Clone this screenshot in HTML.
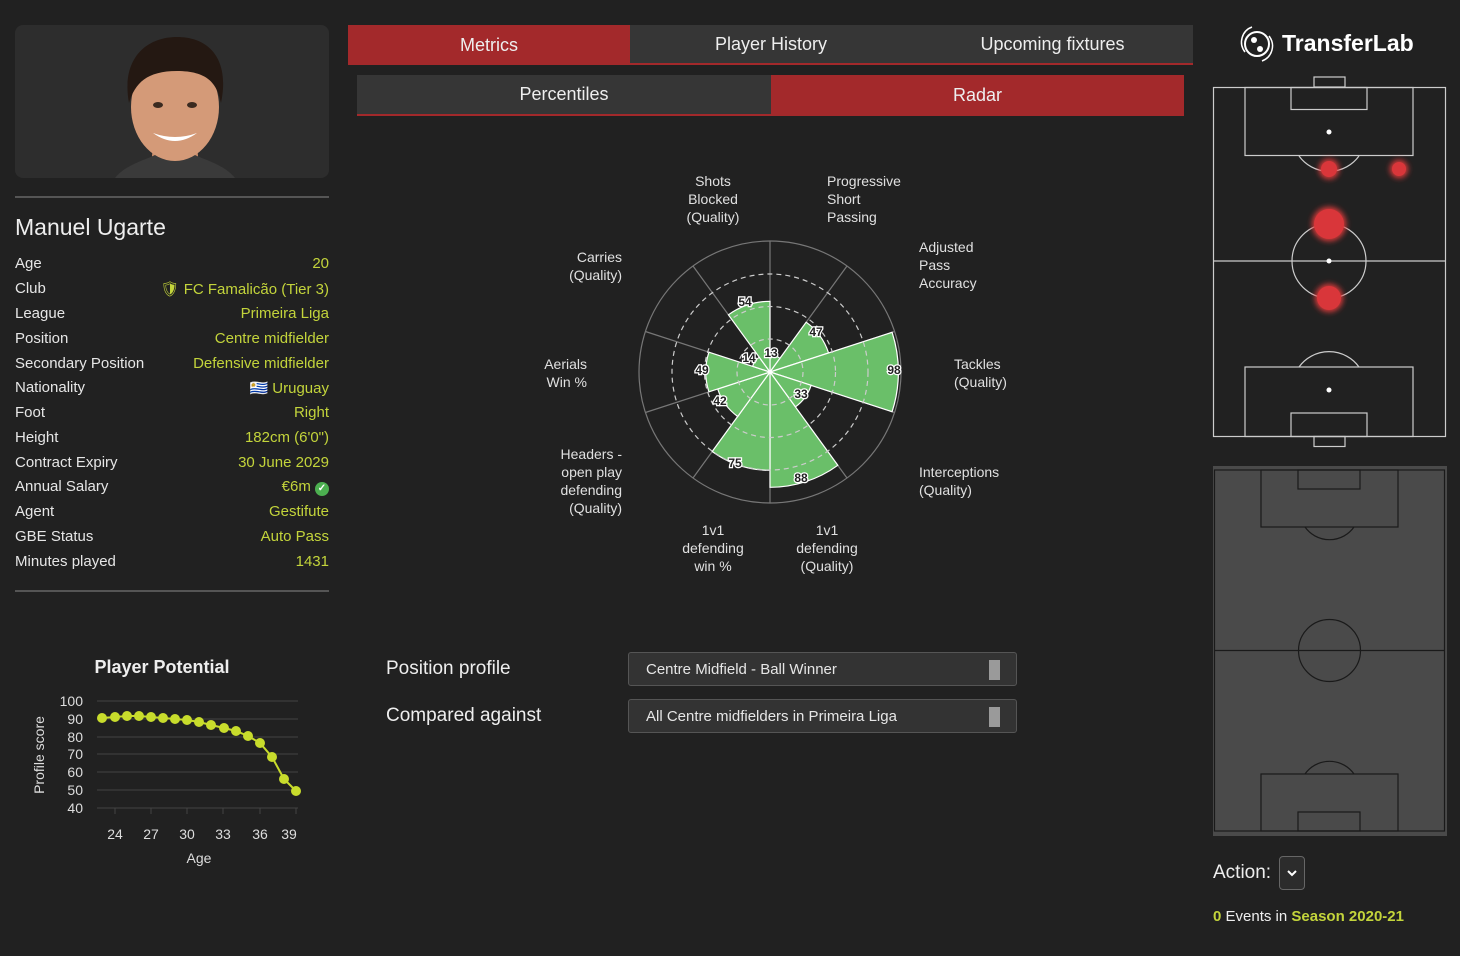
<!DOCTYPE html>
<html><head><meta charset="utf-8"><style>
*{margin:0;padding:0;box-sizing:border-box}
body{width:1460px;height:956px;background:#212121;font-family:"Liberation Sans",sans-serif;color:#e6e6e6;position:relative;overflow:hidden}
.a{position:absolute}
.row{position:absolute;left:15px;width:314px;font-size:15px;display:flex;justify-content:space-between}
.row span:last-child{color:#c3d43b}
.tab{position:absolute;display:flex;align-items:center;justify-content:center;font-size:18px;color:#eee}
.lbl{position:absolute;font-size:14px;line-height:18px;color:#e0e0e0}
.sel{position:absolute;left:628px;width:389px;height:34px;background:#333;border:1px solid #555;border-radius:3px;font-size:15px;padding:8px 17px;color:#e6e6e6}
.sel i{position:absolute;left:360px;top:7px;width:11px;height:20px;background:#9a9a9a}
</style></head><body>

<!-- photo card -->
<div class="a" style="left:15px;top:25px;width:314px;height:153px;background:#2d2d2d;border-radius:8px;overflow:hidden">
<svg width="314" height="153">
<path d="M135 153 L138 120 L182 120 L185 153Z" fill="#c98c6a"/>
<path d="M100 153 C110 140 130 135 140 130 L180 130 C190 135 210 140 220 153Z" fill="#3a3a3a"/>
<ellipse cx="160" cy="82" rx="44" ry="54" fill="#d49a78"/>
<path d="M114 78 C106 35 130 12 162 12 C195 12 215 35 206 78 C202 58 192 46 162 46 C132 46 120 58 114 78Z" fill="#241812"/>
<path d="M138 108 Q160 124 182 108 Q160 116 138 108Z" fill="#fff"/>
<ellipse cx="143" cy="80" rx="5" ry="3" fill="#3a2a20"/><ellipse cx="177" cy="80" rx="5" ry="3" fill="#3a2a20"/>
</svg></div>
<div class="a" style="left:15px;top:196px;width:314px;height:2px;background:#555"></div>
<div class="a" style="left:15px;top:214px;font-size:23px;color:#eee">Manuel Ugarte</div>
<div class="row" style="top:255px"><span>Age</span><span>20</span></div>
<div class="row" style="top:280px"><span>Club</span><span>🛡 FC Famalicão (Tier 3)</span></div>
<div class="row" style="top:305px"><span>League</span><span>Primeira Liga</span></div>
<div class="row" style="top:330px"><span>Position</span><span>Centre midfielder</span></div>
<div class="row" style="top:355px"><span>Secondary Position</span><span>Defensive midfielder</span></div>
<div class="row" style="top:379px"><span>Nationality</span><span>🇺🇾 Uruguay</span></div>
<div class="row" style="top:404px"><span>Foot</span><span>Right</span></div>
<div class="row" style="top:429px"><span>Height</span><span>182cm (6'0")</span></div>
<div class="row" style="top:454px"><span>Contract Expiry</span><span>30 June 2029</span></div>
<div class="row" style="top:478px"><span>Annual Salary</span><span>€6m <b style="display:inline-block;width:14px;height:14px;border-radius:50%;background:#4caf50;color:#fff;font-size:10px;text-align:center;line-height:14px">✓</b></span></div>
<div class="row" style="top:503px"><span>Agent</span><span>Gestifute</span></div>
<div class="row" style="top:528px"><span>GBE Status</span><span>Auto Pass</span></div>
<div class="row" style="top:553px"><span>Minutes played</span><span>1431</span></div>
<div class="a" style="left:15px;top:590px;width:314px;height:2px;background:#555"></div>

<!-- potential chart -->
<svg class="a" style="left:0;top:640px" width="330" height="240" font-family="Liberation Sans" fill="#ddd">
<text x="162" y="33" font-size="18" font-weight="bold" text-anchor="middle" fill="#eee">Player Potential</text>
<g stroke="#444" stroke-width="1">
<line x1="97" x2="298" y1="61" y2="61"/><line x1="97" x2="298" y1="79" y2="79"/><line x1="97" x2="298" y1="97" y2="97"/><line x1="97" x2="298" y1="114" y2="114"/><line x1="97" x2="298" y1="132" y2="132"/><line x1="97" x2="298" y1="150" y2="150"/><line x1="97" x2="298" y1="168" y2="168"/>
<line x1="115" x2="115" y1="168" y2="174"/><line x1="151" x2="151" y1="168" y2="174"/><line x1="187" x2="187" y1="168" y2="174"/><line x1="223" x2="223" y1="168" y2="174"/><line x1="260" x2="260" y1="168" y2="174"/><line x1="296" x2="296" y1="168" y2="174"/>
</g>
<g font-size="14" text-anchor="end">
<text x="83" y="66">100</text><text x="83" y="84">90</text><text x="83" y="102">80</text><text x="83" y="119">70</text><text x="83" y="137">60</text><text x="83" y="155">50</text><text x="83" y="173">40</text></g>
<g font-size="14" text-anchor="middle">
<text x="115" y="199">24</text><text x="151" y="199">27</text><text x="187" y="199">30</text><text x="223" y="199">33</text><text x="260" y="199">36</text><text x="289" y="199">39</text>
<text x="199" y="223">Age</text></g>
<text transform="translate(44,115) rotate(-90)" font-size="14" text-anchor="middle">Profile score</text>
<polyline fill="none" stroke="#c8dc2c" stroke-width="2" points="102,78 115,77 127,76 139,76 151,77 163,78 175,79 187,80 199,82 211,85 224,88 236,91 248,96 260,103 272,117 284,139 296,151"/>
<g fill="#c8dc2c"><circle cx="102" cy="78" r="5"/><circle cx="115" cy="77" r="5"/><circle cx="127" cy="76" r="5"/><circle cx="139" cy="76" r="5"/><circle cx="151" cy="77" r="5"/><circle cx="163" cy="78" r="5"/><circle cx="175" cy="79" r="5"/><circle cx="187" cy="80" r="5"/><circle cx="199" cy="82" r="5"/><circle cx="211" cy="85" r="5"/><circle cx="224" cy="88" r="5"/><circle cx="236" cy="91" r="5"/><circle cx="248" cy="96" r="5"/><circle cx="260" cy="103" r="5"/><circle cx="272" cy="117" r="5"/><circle cx="284" cy="139" r="5"/><circle cx="296" cy="151" r="5"/></g>
</svg>

<!-- tabs -->
<div class="tab" style="left:348px;top:25px;width:282px;height:40px;background:#a3292b">Metrics</div>
<div class="tab" style="left:630px;top:25px;width:282px;height:40px;background:#363636;border-bottom:2px solid #a3292b">Player History</div>
<div class="tab" style="left:912px;top:25px;width:281px;height:40px;background:#363636;border-bottom:2px solid #a3292b">Upcoming fixtures</div>
<div class="tab" style="left:357px;top:75px;width:414px;height:41px;background:#363636;border-bottom:2px solid #a3292b">Percentiles</div>
<div class="tab" style="left:771px;top:75px;width:413px;height:41px;background:#a3292b">Radar</div>

<!-- radar -->
<svg class="a" style="left:0;top:0" width="1200" height="600" font-family="Liberation Sans">
<g stroke="#777" stroke-width="1.2" fill="none">
<circle cx="770" cy="372" r="131"/>
<line x1="770" y1="372" x2="770" y2="241"/><line x1="770" y1="372" x2="847" y2="266"/><line x1="770" y1="372" x2="894.6" y2="331.5"/><line x1="770" y1="372" x2="894.6" y2="412.5"/><line x1="770" y1="372" x2="847" y2="478"/><line x1="770" y1="372" x2="770" y2="503"/><line x1="770" y1="372" x2="693" y2="478"/><line x1="770" y1="372" x2="645.4" y2="412.5"/><line x1="770" y1="372" x2="645.4" y2="331.5"/><line x1="770" y1="372" x2="693" y2="266"/>
</g>
<g fill="#6abf69" stroke="#fff" stroke-width="1.2">
<path d="M770 372 L770 355 A17 17 0 0 1 780 358.2Z"/>
<path d="M770 372 L806.2 322.2 A61.6 61.6 0 0 1 828.6 353Z"/>
<path d="M770 372 L892.1 332.3 A128.4 128.4 0 0 1 892.1 411.7Z"/>
<path d="M770 372 L811.1 385.3 A43.2 43.2 0 0 1 795.4 406.9Z"/>
<path d="M770 372 L837.8 465.3 A115.3 115.3 0 0 1 770 487.3Z"/>
<path d="M770 372 L770 470.3 A98.3 98.3 0 0 1 712.2 451.5Z"/>
<path d="M770 372 L737.7 416.5 A55 55 0 0 1 717.7 389Z"/>
<path d="M770 372 L708.9 391.8 A64.2 64.2 0 0 1 708.9 352.2Z"/>
<path d="M770 372 L752.6 366.3 A18.3 18.3 0 0 1 759.2 357.2Z"/>
<path d="M770 372 L728.4 314.8 A70.7 70.7 0 0 1 770 301.3Z"/>
</g>
<g fill="none" stroke="#ccc" stroke-width="1.2" stroke-dasharray="5 4">
<circle cx="770" cy="372" r="33"/><circle cx="770" cy="372" r="65.5"/><circle cx="770" cy="372" r="98"/></g>
<g font-size="12" font-weight="bold" fill="#222" stroke="#fff" stroke-width="2.5" paint-order="stroke" text-anchor="middle">
<text x="771" y="357">13</text><text x="816" y="336">47</text><text x="894" y="374">98</text><text x="801" y="398">33</text><text x="801" y="482">88</text><text x="735" y="467">75</text><text x="720" y="405">42</text><text x="702" y="374">49</text><text x="749" y="362">14</text><text x="745" y="306">54</text>
</g>
</svg>
<div class="lbl" style="left:673px;top:172px;width:80px;text-align:center">Shots<br>Blocked<br>(Quality)</div>
<div class="lbl" style="left:827px;top:172px">Progressive<br>Short<br>Passing</div>
<div class="lbl" style="left:919px;top:238px">Adjusted<br>Pass<br>Accuracy</div>
<div class="lbl" style="left:954px;top:355px">Tackles<br>(Quality)</div>
<div class="lbl" style="left:919px;top:463px">Interceptions<br>(Quality)</div>
<div class="lbl" style="left:787px;top:521px;width:80px;text-align:center">1v1<br>defending<br>(Quality)</div>
<div class="lbl" style="left:673px;top:521px;width:80px;text-align:center">1v1<br>defending<br>win %</div>
<div class="lbl" style="left:522px;top:445px;width:100px;text-align:right">Headers -<br>open play<br>defending<br>(Quality)</div>
<div class="lbl" style="left:487px;top:355px;width:100px;text-align:right">Aerials<br>Win %</div>
<div class="lbl" style="left:522px;top:248px;width:100px;text-align:right">Carries<br>(Quality)</div>

<div class="a" style="left:386px;top:658px;font-size:19px;color:#eee">Position profile</div>
<div class="a" style="left:386px;top:705px;font-size:19px;color:#eee">Compared against</div>
<div class="sel" style="top:652px">Centre Midfield - Ball Winner<i></i></div>
<div class="sel" style="top:699px">All Centre midfielders in Primeira Liga<i></i></div>

<!-- logo -->
<svg class="a" style="left:1238px;top:23px" width="40" height="42"><circle cx="19" cy="21" r="12" fill="none" stroke="#fff" stroke-width="2"/><path d="M7 29 A16 16 0 0 1 14 4" stroke="#fff" fill="none" stroke-width="1.5"/><path d="M31 13 A16 16 0 0 1 24 38" stroke="#fff" fill="none" stroke-width="1.5"/><circle cx="16" cy="17" r="3" fill="#fff"/><circle cx="22" cy="26" r="3" fill="#fff"/></svg>
<div class="a" style="left:1282px;top:30px;font-size:23px;font-weight:bold;color:#fff">TransferLab</div>

<!-- top pitch -->
<svg class="a" style="left:1205px;top:70px" width="250" height="390">
<defs><filter id="g" x="-1" y="-1" width="3" height="3"><feGaussianBlur stdDeviation="3"/></filter></defs>
<g stroke="#ccc" stroke-width="1.2" fill="none">
<rect x="8.5" y="17.5" width="232" height="349"/>
<rect x="109" y="7" width="31" height="10"/>
<rect x="86" y="17.5" width="76" height="22"/>
<rect x="40" y="17.5" width="168" height="68"/>
<path d="M94 86 A37 37 0 0 0 154 86"/>
<line x1="8.5" y1="191" x2="240.5" y2="191"/>
<circle cx="124" cy="191" r="37"/>
<path d="M94 297 A37 37 0 0 1 154 297"/>
<rect x="40" y="297" width="168" height="69.5"/>
<rect x="86" y="343" width="76" height="23.5"/>
<rect x="109" y="366.5" width="31" height="10"/>
</g>
<g fill="#fff"><circle cx="124" cy="62" r="2.5"/><circle cx="124" cy="191" r="2.5"/><circle cx="124" cy="320" r="2.5"/></g>
<g fill="#e03a3a" filter="url(#g)"><circle cx="124" cy="99" r="10"/><circle cx="194" cy="99" r="9"/><circle cx="124" cy="154" r="17"/><circle cx="124" cy="228" r="14"/></g>
<g fill="#d9363a"><circle cx="124" cy="99" r="8"/><circle cx="194" cy="99" r="7"/><circle cx="124" cy="154" r="15"/><circle cx="124" cy="228" r="12"/></g>
</svg>

<!-- bottom pitch -->
<svg class="a" style="left:1205px;top:460px" width="250" height="385">
<rect x="8" y="6" width="234" height="370" fill="#4a4a4a"/>
<g stroke="#1a1a1a" stroke-width="1.2" fill="none">
<rect x="9.5" y="10" width="230" height="361"/>
<rect x="56" y="10" width="137" height="57"/>
<rect x="93" y="10" width="62" height="19"/>
<path d="M100 67 A30 30 0 0 0 149 67"/>
<line x1="9.5" y1="190.5" x2="239.5" y2="190.5"/>
<circle cx="124.5" cy="190.5" r="31"/>
<path d="M100 314 A30 30 0 0 1 149 314"/>
<rect x="56" y="314" width="137" height="57"/>
<rect x="93" y="352" width="62" height="19"/>
</g></svg>

<div class="a" style="left:1213px;top:862px;font-size:19px;color:#eee">Action:</div>
<div class="a" style="left:1279px;top:856px;width:26px;height:34px;border:1px solid #666;border-radius:4px;background:#2c2c2c"><svg width="24" height="32"><path d="M8 14 L12 18 L16 14" stroke="#fff" stroke-width="2" fill="none"/></svg></div>
<div class="a" style="left:1213px;top:908px;font-size:15px;color:#eee"><b style="color:#c3d43b">0</b> Events in <b style="color:#c3d43b">Season 2020-21</b></div>
</body></html>
